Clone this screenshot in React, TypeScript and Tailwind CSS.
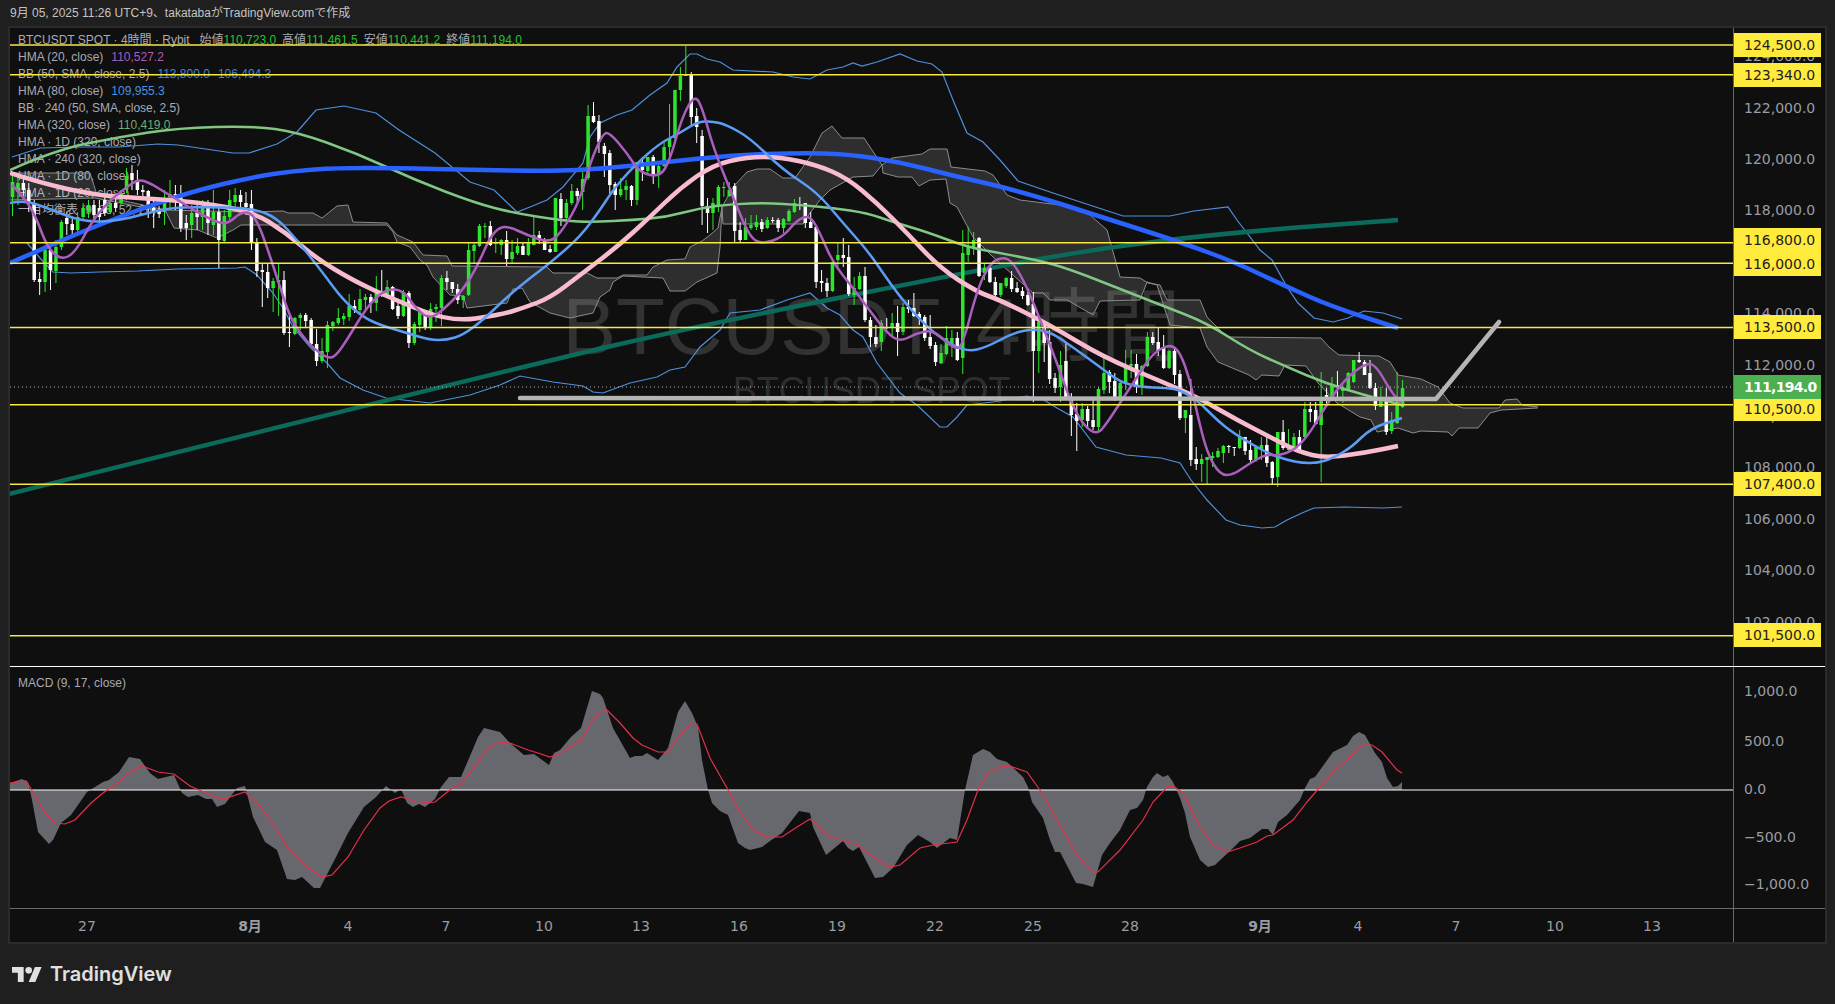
import React from "react";

// all chart data is in page pixels, the svg viewBoxes start at the pane's page offset
const BB_UPPER = "12,157 40,148 79,147 119,147 158,144 178,145 233,153 249,153 277,144 297,132 316,110 344,106 376,113 399,130 435,153 470,182 494,190 517,212 530,207 547,200 563,187 583,163 590,137 600,123 617,115 632,110 650,95 667,83 677,67 690,54 697,54 707,59 720,62 733,70 773,72 793,77 810,79 827,70 843,67 853,63 862,66 877,62 900,54 917,61 932,64 942,72 953,100 967,133 983,142 1000,160 1018,181 1053,193 1123,216 1170,216 1194,211 1228,207 1237,220 1260,250 1272,260 1287,287 1298,303 1314,318 1333,322 1348,318 1364,311 1383,313 1402,319";
const BB_LOWER = "27,243 40,258 53,272 71,273 99,272 138,271 178,269 237,268 245,267 257,275 273,293 283,308 293,327 310,347 327,363 340,378 363,390 386,398 430,403 470,395 500,385 520,376 553,382 583,386 593,392 603,393 630,383 657,377 670,370 685,367 700,347 720,330 730,313 760,310 787,300 810,293 827,308 840,315 853,330 863,337 877,363 900,393 917,405 940,427 947,427 957,417 967,405 993,402 1027,396 1044,400 1057,408 1073,417 1096,447 1126,455 1161,458 1180,463 1191,480 1207,500 1226,520 1240,525 1262,528 1275,527 1287,520 1302,513 1314,508 1344,507 1383,508 1402,507";
const HMA_80 = "10,203 24,200 47,208 83,222 119,221 166,208 198,207 253,208 277,218 297,240 323,273 343,300 363,317 380,325 407,333 430,340 447,340 463,335 483,320 507,297 530,278 550,263 580,237 600,210 613,190 633,167 660,143 680,133 697,122 712,121 727,125 750,138 783,170 817,192 843,223 867,250 883,273 900,297 923,323 943,340 967,352 987,347 1013,333 1033,329 1050,332 1067,343 1100,367 1120,382 1140,387 1167,388 1180,390 1197,400 1217,420 1233,433 1267,453 1287,460 1302,463 1318,463 1333,458 1352,447 1371,428 1402,418";
const HMA_20 = "12,185 24,197 36,217 47,247 61,260 75,253 91,223 107,203 123,190 138,179 150,183 166,193 178,200 198,213 221,224 230,222 240,213 250,212 258,223 267,247 280,287 290,317 300,333 313,348 327,358 335,357 347,340 360,318 373,300 387,289 403,290 417,310 430,319 443,310 463,290 477,267 490,237 500,227 510,227 527,235 550,243 563,230 580,200 590,163 603,133 610,133 627,153 640,173 660,177 670,160 682,117 695,94 703,110 713,147 733,197 750,238 763,244 783,237 797,220 810,215 820,233 833,263 853,288 867,307 887,333 900,342 917,333 933,330 953,348 962,348 977,290 990,263 1003,257 1013,262 1027,287 1043,327 1057,363 1070,400 1083,425 1097,435 1107,423 1120,403 1137,377 1153,353 1170,344 1180,352 1190,380 1197,413 1207,453 1220,475 1233,475 1250,463 1267,454 1277,456 1295,450 1310,433 1325,407 1344,380 1367,362 1377,367 1390,390 1402,405";
const HMA_320 = "10,170 55,150 119,137 178,128 253,126 297,132 356,153 415,180 475,203 514,213 565,221 593,222 633,220 667,217 700,208 733,204 767,203 800,205 833,208 867,213 893,222 927,232 967,247 1000,253 1046,262 1077,272 1115,287 1161,305 1207,323 1249,350 1287,367 1325,383 1364,395 1402,405";
const HMA_BLUE = "10,263 40,250 79,233 119,217 158,203 198,190 253,177 293,171 336,168 395,168 474,170 554,171 600,169 667,162 733,155 800,153 847,154 900,162 950,175 1020,191 1111,220 1180,242 1237,263 1287,287 1333,307 1398,328";
const HMA_PINK = "10,173 40,183 95,195 138,198 198,202 253,212 285,232 316,258 352,280 395,300 451,322 500,315 523,308 550,298 580,275 617,247 650,217 680,188 713,165 747,157 780,157 817,165 847,178 877,203 907,233 940,268 977,292 1000,300 1050,325 1103,357 1165,383 1199,398 1237,420 1276,440 1299,452 1325,458 1364,453 1398,446";
const HMA_TEAL = "9,494 520,367 703,325 963,273 1100,248 1237,232 1398,220";
const CLOUD_TOP = "10,173 90,173 97,195 166,210 250,212 283,211 288,213 313,213 322,218 337,206 348,205 353,222 387,223 397,235 413,242 423,255 447,256 452,266 547,267 553,273 587,273 597,278 617,278 623,275 647,275 653,267 667,260 685,259 690,247 702,241 710,235 718,228 722,207 733,187 747,172 757,169 770,169 783,178 795,178 810,157 822,133 832,126 842,138 864,138 882,165 892,158 922,154 930,149 947,149 951,167 985,171 993,175 1007,195 1020,200 1060,205 1090,215 1107,230 1120,277 1140,278 1148,283 1160,285 1167,300 1200,300 1207,317 1227,337 1321,338 1329,347 1339,355 1379,356 1390,362 1398,375 1421,379 1438,387 1450,403 1463,408 1499,408 1505,400 1517,399 1522,405 1538,407";
const CLOUD_BOTTOM = "10,200 95,198 166,212 174,228 198,230 217,238 233,230 241,225 387,225 393,232 397,242 410,247 420,260 427,265 433,277 450,295 463,296 467,308 507,303 513,289 522,288 530,302 550,313 570,318 593,313 600,297 610,290 613,282 623,276 663,278 670,291 685,291 697,282 717,273 720,247 722,207 723,224 803,224 810,213 820,200 830,190 853,177 873,176 882,165 883,173 898,177 912,177 919,186 930,180 946,179 950,203 957,207 973,237 993,257 1033,293 1043,293 1050,300 1067,300 1093,315 1100,301 1140,300 1147,282 1157,285 1170,325 1200,328 1207,347 1218,362 1249,375 1256,380 1262,375 1279,376 1285,365 1306,366 1318,383 1337,403 1360,417 1371,420 1377,432 1398,428 1413,433 1421,431 1448,432 1452,436 1459,428 1478,428 1490,413 1501,410 1538,408";
const MACD_AREA = "10,790 10,783 22,779 28,782 32,800 38,832 49,844 53,840 61,823 71,815 87,792 103,782 109,780 119,772 129,757 140,759 150,773 158,779 174,775 182,793 188,797 198,795 206,799 212,799 217,807 225,804 237,788 245,786 253,817 265,842 277,850 287,879 295,880 302,877 314,888 320,888 336,857 348,833 364,807 376,797 386,786 395,793 401,789 407,803 413,807 419,804 425,807 435,799 441,787 449,777 461,777 467,763 478,737 484,728 500,732 510,743 524,755 534,754 549,765 554,753 560,750 571,737 581,728 592,691 600,694 603,698 613,728 630,758 635,756 642,756 647,753 658,760 668,748 678,712 685,701 692,713 698,727 702,760 708,790 712,803 720,811 728,815 738,843 745,848 750,850 762,847 770,841 782,833 799,811 810,813 813,827 826,855 843,841 848,848 853,851 859,847 875,878 883,877 893,868 907,845 918,835 930,842 937,848 950,838 957,840 965,790 973,755 983,749 990,752 997,759 1007,762 1023,777 1028,787 1032,802 1043,818 1050,840 1055,852 1060,852 1076,883 1083,884 1093,887 1102,855 1110,843 1120,830 1130,810 1137,808 1143,800 1147,787 1153,777 1157,773 1163,777 1168,775 1173,782 1180,798 1185,813 1190,837 1200,860 1208,867 1215,865 1233,848 1240,841 1250,838 1262,829 1268,829 1273,835 1278,822 1287,815 1300,800 1305,788 1310,779 1315,777 1333,752 1347,745 1353,736 1359,732 1365,735 1375,753 1382,762 1387,778 1393,787 1398,786 1402,782 1402,790";
const MACD_SIGNAL = "10,783 26,781 36,797 45,813 55,823 65,824 75,820 91,803 103,793 119,782 130,772 142,766 158,772 174,774 190,786 206,793 223,799 245,792 261,807 277,830 289,850 308,868 322,877 332,875 348,857 364,830 380,808 389,801 401,797 415,801 427,803 435,802 451,789 461,784 470,773 488,748 500,742 510,743 528,750 538,753 550,757 561,753 581,740 593,720 600,712 607,710 620,723 633,738 642,745 658,752 668,752 680,735 690,724 697,724 710,758 727,788 740,812 753,830 767,837 782,837 797,827 810,819 827,835 840,840 858,845 877,860 890,867 900,865 920,848 933,845 957,842 967,820 978,790 988,773 1000,767 1010,766 1027,772 1042,793 1057,820 1077,855 1093,872 1098,872 1120,850 1143,820 1153,802 1167,787 1173,786 1183,793 1200,827 1213,845 1227,852 1240,848 1257,842 1267,836 1273,835 1293,820 1307,802 1320,787 1337,768 1350,757 1363,745 1372,745 1382,752 1397,770 1402,773";

// top, bottom, wick top, wick bottom, green
const CANDLES: number[][] = [
  [182,197,172,216,1],[183,192,175,205,1],[183,190,178,200,0],[190,203,183,212,0],[203,280,200,282,0],[279,282,272,295,0],[250,282,245,292,1],[250,270,245,290,0],[247,271,240,283,1],[222,247,220,250,1],
  [218,224,212,235,0],[224,230,218,235,0],[217,230,212,233,1],[208,217,203,220,1],[205,212,200,218,1],[205,215,200,220,0],[208,217,200,225,0],[200,213,195,216,0],[203,212,198,214,1],[203,208,197,212,0],
  [193,203,190,206,1],[176,190,168,193,1],[173,180,165,190,0],[180,190,170,195,0],[190,192,185,197,0],[191,208,190,218,0],[208,212,200,228,0],[210,214,206,218,0],[202,212,190,225,1],[194,202,180,210,1],
  [194,200,185,210,0],[196,228,185,232,0],[223,228,215,240,0],[213,225,205,238,1],[213,217,205,230,0],[208,217,200,230,1],[208,223,200,235,0],[212,225,190,235,1],[212,240,205,268,0],[216,241,210,243,1],
  [200,217,190,220,1],[195,202,188,208,1],[195,202,190,210,0],[203,207,192,215,0],[204,243,190,250,0],[243,271,238,277,0],[270,272,263,307,0],[272,288,263,298,0],[281,288,278,312,1],[280,282,264,316,1],
  [280,333,271,335,0],[332,333,312,347,0],[318,334,317,335,1],[315,318,313,330,1],[315,321,313,328,0],[320,344,318,345,0],[344,361,329,366,0],[351,361,338,363,1],[325,352,321,368,1],[322,326,321,331,1],
  [318,323,308,325,1],[316,319,313,325,1],[306,317,294,321,1],[306,310,300,313,0],[299,310,289,313,1],[297,300,294,310,1],[297,303,294,313,0],[293,303,276,311,1],[293,296,270,297,0],[287,296,280,298,1],
  [287,309,286,310,0],[306,316,302,319,0],[292,316,290,317,1],[293,343,291,348,0],[324,343,322,345,1],[311,325,308,332,1],[311,327,310,330,0],[309,327,303,330,1],[307,309,304,322,1],[278,308,275,326,1],
  [278,282,271,290,0],[282,289,282,293,0],[289,300,284,304,0],[296,300,295,308,1],[250,295,242,296,1],[245,251,242,263,1],[226,246,224,247,1],[226,227,223,238,1],[226,245,221,246,0],[242,244,238,253,1],
  [240,245,239,255,1],[240,259,231,266,0],[252,259,240,263,1],[246,253,238,255,1],[246,255,243,255,0],[243,255,238,256,1],[235,245,215,245,1],[235,240,231,244,0],[240,250,238,250,0],[249,252,245,253,0],
  [198,252,198,252,1],[199,218,193,226,0],[203,218,199,222,1],[191,203,184,205,1],[191,196,188,202,0],[179,192,172,210,1],[116,178,105,180,1],[116,122,102,123,0],[121,142,115,153,0],[146,154,143,177,0],
  [153,185,150,195,0],[184,195,182,210,0],[189,195,178,197,1],[186,190,180,200,1],[186,200,185,206,0],[162,200,162,205,1],[162,170,157,181,0],[157,171,157,173,1],[157,175,155,184,0],[166,175,163,188,1],
  [147,166,142,167,1],[138,147,104,158,1],[90,138,90,140,1],[76,90,67,101,1],[74,76,46,76,1],[75,117,72,127,0],[116,127,108,143,0],[136,206,130,225,0],[206,213,198,233,0],[203,213,198,230,1],
  [187,205,185,212,1],[187,188,182,197,1],[190,196,182,197,1],[186,231,183,242,0],[230,240,222,243,0],[227,240,218,240,1],[225,228,215,230,1],[222,227,215,230,1],[222,229,219,232,0],[220,228,217,229,1],
  [220,221,217,223,0],[220,228,218,232,0],[219,228,218,233,1],[211,221,209,222,1],[203,212,199,213,1],[204,206,197,210,0],[203,223,203,228,0],[222,228,212,228,0],[227,282,225,288,0],[281,283,270,292,0],
  [283,291,278,297,0],[262,291,260,292,1],[255,260,242,267,1],[255,258,238,267,0],[257,294,245,296,0],[288,295,277,305,1],[276,289,272,290,1],[276,320,267,322,0],[320,337,317,347,0],[337,344,325,347,0],
  [323,342,320,351,1],[327,328,318,329,0],[323,328,313,338,1],[323,332,306,356,0],[307,332,303,335,1],[307,309,300,313,0],[308,316,293,317,0],[314,318,312,325,0],[317,338,315,341,0],[337,346,315,349,0],
  [345,362,342,366,0],[353,363,344,364,1],[338,354,326,355,1],[338,344,330,357,1],[338,360,332,361,0],[253,358,230,374,1],[246,255,227,262,1],[240,247,232,255,1],[238,276,237,277,0],[268,273,263,280,1],
  [268,282,267,283,0],[282,295,277,300,0],[283,295,283,297,1],[278,286,277,288,1],[278,289,271,292,0],[288,292,282,293,0],[291,296,287,299,0],[295,305,292,306,0],[304,351,292,402,0],[322,351,322,373,1],
  [323,343,322,362,0],[342,379,330,384,0],[378,388,373,393,0],[365,387,351,402,1],[361,397,342,398,0],[400,415,393,436,0],[414,421,403,451,0],[409,420,403,427,1],[409,421,406,427,0],[420,427,397,430,0],
  [389,427,387,432,1],[373,390,356,394,1],[372,382,370,393,0],[381,397,373,401,0],[383,400,382,405,1],[365,383,350,390,1],[364,366,350,378,1],[364,387,354,393,0],[366,387,365,395,1],[337,366,332,367,1],
  [337,343,332,345,0],[342,351,328,356,0],[348,368,335,369,0],[351,368,350,369,1],[351,375,349,384,0],[374,418,370,420,0],[410,418,410,433,1],[415,460,379,466,0],[459,464,447,470,0],[459,464,454,482,1],
  [457,460,457,484,1],[456,458,452,467,1],[451,457,448,458,1],[446,453,445,463,1],[446,447,445,453,0],[447,448,447,456,0],[437,448,430,449,1],[437,451,437,455,0],[450,460,440,462,0],[447,460,447,462,1],
  [445,450,437,460,1],[445,463,437,467,0],[462,478,461,484,0],[432,477,432,487,1],[432,448,420,450,0],[446,450,429,451,1],[437,447,433,450,1],[437,453,430,453,0],[409,437,402,438,1],[409,412,402,422,0],
  [410,424,402,425,0],[397,425,372,482,1],[395,400,388,405,0],[386,397,377,398,1],[385,387,371,398,0],[389,391,385,403,1],[373,390,372,391,1],[360,382,360,383,1],[360,362,352,363,0],[362,375,360,375,0],
  [373,388,360,389,0],[388,406,383,410,0],[397,407,387,407,1],[400,432,388,435,0],[420,431,412,434,1],[397,423,372,424,1],[388,407,380,408,1],
];

const HORIZONTALS = [124500, 123340, 116800, 116000, 113500, 110500, 107400, 101500];
const PRICE_TICKS = [124000, 122000, 120000, 118000, 114000, 112000, 110000, 108000, 106000, 104000, 102000];
const PRICE_LABELS = [
  { text: "124,500.0", y: 45 },
  { text: "123,340.0", y: 75 },
  { text: "116,800.0", y: 240 },
  { text: "116,000.0", y: 264 },
  { text: "113,500.0", y: 327 },
  { text: "110,500.0", y: 409 },
  { text: "107,400.0", y: 484 },
  { text: "101,500.0", y: 635 },
];
const MACD_TICKS = [
  { text: "1,000.0", y: 691 },
  { text: "500.0", y: 741 },
  { text: "0.0", y: 789 },
  { text: "−500.0", y: 837 },
  { text: "−1,000.0", y: 884 },
];
const TIME_LABELS = [
  { text: "27", x: 87 },
  { text: "8月", x: 250, bold: true },
  { text: "4", x: 348 },
  { text: "7", x: 446 },
  { text: "10", x: 544 },
  { text: "13", x: 641 },
  { text: "16", x: 739 },
  { text: "19", x: 837 },
  { text: "22", x: 935 },
  { text: "25", x: 1033 },
  { text: "28", x: 1130 },
  { text: "9月", x: 1260, bold: true },
  { text: "4", x: 1358 },
  { text: "7", x: 1456 },
  { text: "10", x: 1555 },
  { text: "13", x: 1652 },
];

const priceY = (price: number) => 45 + (124500 - price) * 0.02569;

// rounds the corners of a traced line through the midpoints
const smooth = (points: string) => {
  const pts = points.split(" ").map((p) => p.split(",").map(Number));
  let d = `M${pts[0][0]} ${pts[0][1]}`;
  for (let i = 1; i < pts.length - 1; i++) {
    const mx = (pts[i][0] + pts[i + 1][0]) / 2;
    const my = (pts[i][1] + pts[i + 1][1]) / 2;
    d += ` Q${pts[i][0]} ${pts[i][1]} ${mx} ${my}`;
  }
  const last = pts[pts.length - 1];
  return `${d} L${last[0]} ${last[1]}`;
};

const reversed = (points: string) => points.split(" ").reverse().join(" ");

const Legend: React.FC = () => {
  const green = "text-[#22c32e]";
  return (
    <div className="absolute left-2 top-1 flex flex-col gap-px whitespace-nowrap text-xs leading-4 text-[#a8abb3]">
      <div className="flex gap-1.5">
        <span className="mr-1">BTCUSDT SPOT · 4時間 · Rybit</span>
        <span>始値<span className={green}>110,723.0</span></span>
        <span>高値<span className={green}>111,461.5</span></span>
        <span>安値<span className={green}>110,441.2</span></span>
        <span>終値<span className={green}>111,194.0</span></span>
      </div>
      <div className="flex gap-2"><span>HMA (20, close)</span><span className="text-[#ab5cba]">110,527.2</span></div>
      <div className="flex gap-2"><span>BB (50, SMA, close, 2.5)</span><span className="text-[#3f86d8]">113,800.0</span><span className="text-[#3f86d8]">106,494.3</span></div>
      <div className="flex gap-2"><span>HMA (80, close)</span><span className="text-[#4a90e2]">109,955.3</span></div>
      <div>BB · 240 (50, SMA, close, 2.5)</div>
      <div className="flex gap-2"><span>HMA (320, close)</span><span className="text-[#6fae72]">110,419.0</span></div>
      <div>HMA · 1D (320, close)</div>
      <div>HMA · 240 (320, close)</div>
      <div>HMA · 1D (80, close)</div>
      <div>HMA · 1D (20, close)</div>
      <div>一目均衡表 (9, 26, 52, 26)</div>
    </div>
  );
};

const PricePane: React.FC = () => (
  <div className="relative min-h-0 flex-1 overflow-hidden">
    <div className="absolute inset-0 flex flex-col items-center justify-center whitespace-nowrap text-white/15">
      <div className="text-[80px] leading-22">BTCUSDT, 4時間</div>
      <div className="text-4xl leading-10">BTCUSDT SPOT</div>
    </div>
    <Legend />
    <svg className="absolute inset-0 block h-full w-full" viewBox="10 28 1723 638" preserveAspectRatio="none">
      <polygon points={`${CLOUD_TOP} ${reversed(CLOUD_BOTTOM)}`} fill="#ffffff" fillOpacity="0.13" />
      <polyline points={CLOUD_TOP} fill="none" stroke="#8c8c8c" strokeWidth="1" />
      <polyline points={CLOUD_BOTTOM} fill="none" stroke="#8c8c8c" strokeWidth="1" />
      <polyline points={BB_UPPER} fill="none" stroke="#4f8fdc" strokeWidth="1.2" />
      <polyline points={BB_LOWER} fill="none" stroke="#4f8fdc" strokeWidth="1.2" />
      <path d={smooth(HMA_TEAL)} fill="none" stroke="#0a6b5b" strokeWidth="4.5" />
      {CANDLES.map((c, i) => {
        const x = 12.5 + i * 5.43;
        const color = c[4] ? "#2ee52e" : "#ffffff";
        return (
          <g key={i}>
            <rect x={x - 0.5} y={c[2]} width="1" height={c[3] - c[2]} fill={color} />
            <rect x={x - 1.75} y={c[0]} width="3.5" height={Math.max(c[1] - c[0], 1)} fill={color} />
          </g>
        );
      })}
      <path d={smooth(HMA_320)} fill="none" stroke="#81c784" strokeWidth="2.5" />
      <path d={smooth(HMA_BLUE)} fill="none" stroke="#2962ff" strokeWidth="4.5" />
      <path d={smooth(HMA_PINK)} fill="none" stroke="#f8bbd0" strokeWidth="4.5" />
      <path d={smooth(HMA_80)} fill="none" stroke="#5b9cf6" strokeWidth="2.5" />
      <path d={smooth(HMA_20)} fill="none" stroke="#ab5fbd" strokeWidth="2.5" />
      <line x1="10" x2="1733" y1="387" y2="387" stroke="#b0b0b0" strokeWidth="1" strokeDasharray="1 3" />
      {HORIZONTALS.map((p) => (
        <line key={p} x1="10" x2="1733" y1={priceY(p)} y2={priceY(p)} stroke="#f7e843" strokeWidth="1.5" />
      ))}
      <polyline points="520,398 1436,399 1499,322" fill="none" stroke="#b4b4b4" strokeWidth="4.5" strokeLinecap="round" strokeLinejoin="round" />
    </svg>
  </div>
);

const PriceAxis: React.FC = () => (
  <div className="relative w-[92px] border-l border-[#6a6a6a] font-['DejaVu_Sans',sans-serif] text-sm text-[#9a9da5]">
    {PRICE_TICKS.map((p) => (
      <div key={p} className="absolute left-2.5 -translate-y-1/2 leading-5" style={{ top: priceY(p) - 29.5 }}>
        {p.toLocaleString("en-US")}.0
      </div>
    ))}
    {PRICE_LABELS.map((l) => (
      <div
        key={l.text}
        className="absolute left-0 right-1 flex h-6 -translate-y-1/2 items-center bg-[#ffeb3b] pl-2.5 text-[#1f2024]"
        style={{ top: l.y - 28 }}
      >
        {l.text}
      </div>
    ))}
    <div
      className="absolute left-0 right-1 flex h-6 -translate-y-1/2 items-center bg-[#4caf50] pl-2.5 font-bold tracking-tighter text-white"
      style={{ top: 387 - 28 }}
    >
      111,194.0
    </div>
  </div>
);

const MacdPane: React.FC = () => (
  <div className="flex min-h-0 border-t border-white">
    <div className="relative flex-1">
      <svg className="absolute inset-0 block h-full w-full" viewBox="10 667 1723 241" preserveAspectRatio="none">
        <polygon points={MACD_AREA} fill="#66686e" />
        <line x1="10" x2="1733" y1="790" y2="790" stroke="#ffffff" strokeWidth="1.2" />
        <polyline points={MACD_SIGNAL} fill="none" stroke="#e5304a" strokeWidth="1.2" />
      </svg>
      <div className="absolute left-2 top-2 text-xs leading-4 text-[#a8abb3]">MACD (9, 17, close)</div>
    </div>
    <div className="relative w-[92px] border-l border-[#6a6a6a] font-['DejaVu_Sans',sans-serif] text-sm text-[#9a9da5]">
      {MACD_TICKS.map((t) => (
        <div key={t.text} className="absolute left-2.5 -translate-y-1/2 leading-5" style={{ top: t.y - 667 }}>
          {t.text}
        </div>
      ))}
    </div>
  </div>
);

const TimeAxis: React.FC = () => (
  <div className="flex min-h-0 border-t border-[#6a6a6a] font-['DejaVu_Sans','Noto_Sans_CJK_JP',sans-serif] text-sm text-[#9a9da5]">
    <div className="relative flex-1">
      {TIME_LABELS.map((t) => (
        <div
          key={t.x}
          className={`absolute top-1/2 -translate-x-1/2 -translate-y-1/2 ${t.bold ? "font-bold" : ""}`}
          style={{ left: t.x - 10 }}
        >
          {t.text}
        </div>
      ))}
    </div>
    <div className="w-[92px] border-l border-[#6a6a6a]" />
  </div>
);

const App: React.FC = () => {
  return (
    <div className="flex h-screen flex-col overflow-hidden bg-[#1f1f1f] font-['Liberation_Sans','Noto_Sans_CJK_JP',sans-serif]">
      <div className="flex h-6.5 items-center px-2.5 text-xs text-[#c4c4c4]">
        9月 05, 2025 11:26 UTC+9、takatabaがTradingView.comで作成
      </div>
      <div className="mx-2 grid min-h-0 flex-1 grid-rows-[1fr_242px_34px] border-2 border-[#2b2b2b] bg-[#0f0f0f]">
        <div className="flex min-h-0">
          <PricePane />
          <PriceAxis />
        </div>
        <MacdPane />
        <TimeAxis />
      </div>
      <div className="flex h-15 items-center gap-2 px-3 text-[#e0e0e0]">
        <svg width="30" height="15" viewBox="0 0 36 18" fill="currentColor">
          <path d="M14 18H7V7H0V0h14v18z" />
          <circle cx="20" cy="4" r="4" />
          <path d="M28 18h-8l7.5-18h8L28 18z" />
        </svg>
        <span className="font-['Inter',sans-serif] text-xl font-semibold">TradingView</span>
      </div>
    </div>
  );
};

export default App;
